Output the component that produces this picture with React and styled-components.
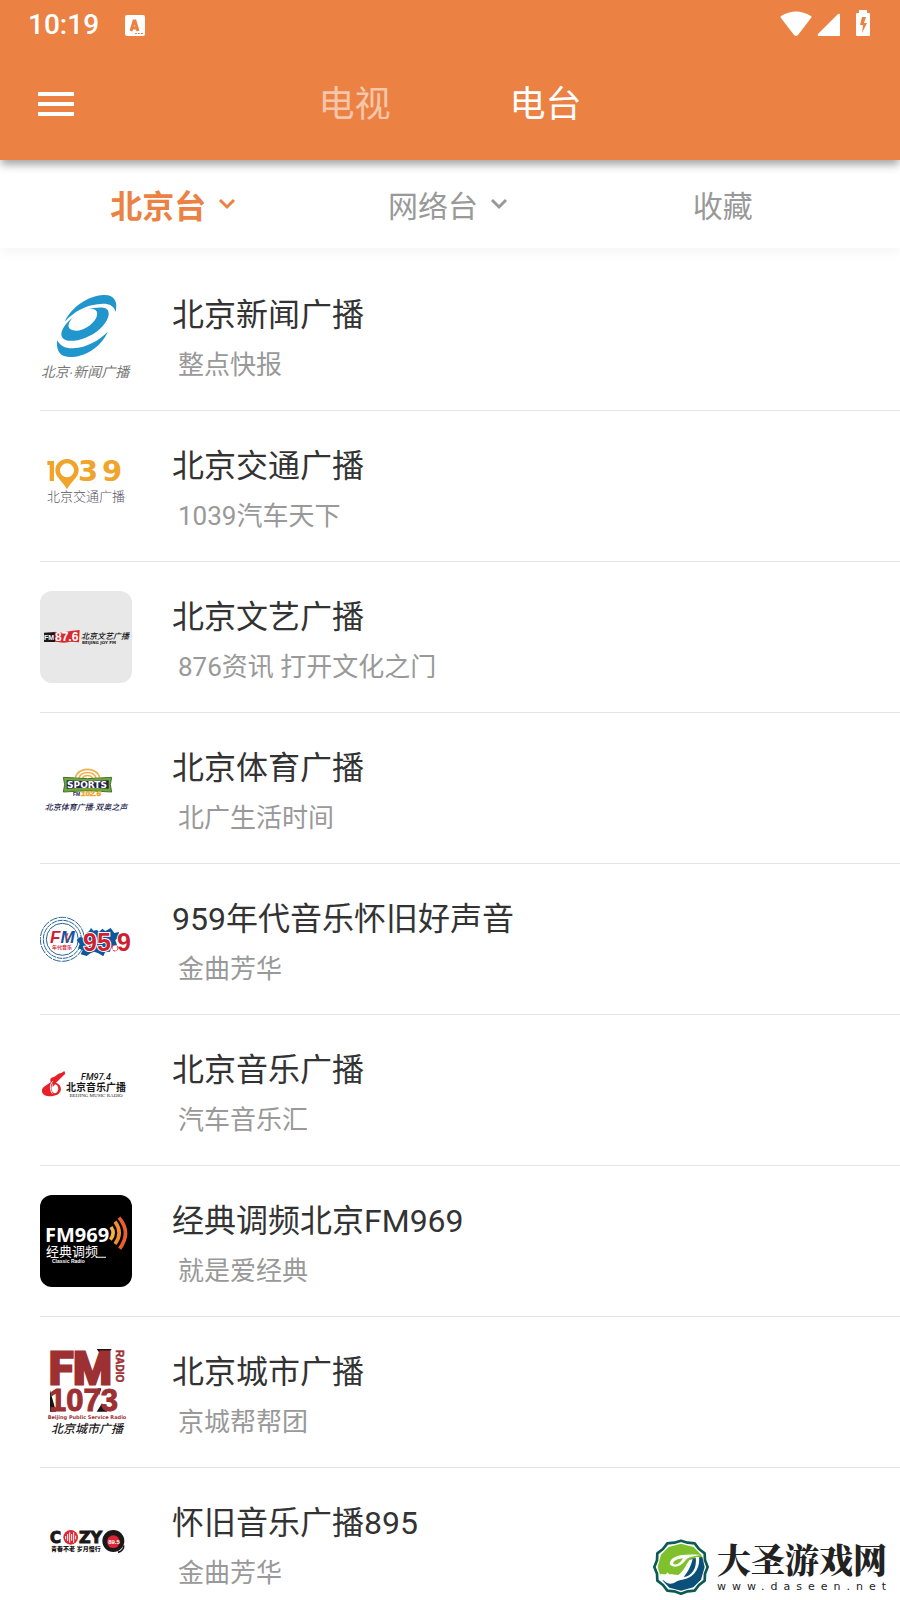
import React from "react";
import styled, { createGlobalStyle } from "styled-components";

const CJK = '"Noto Sans CJK SC", sans-serif';
const ORANGE = "#eb8142";

const GlobalStyle = createGlobalStyle`
  * { box-sizing: border-box; }
  body { margin: 0; background: #fff; font-family: Roboto, ${CJK}; }
  button { border: 0; padding: 0; background: none; font: inherit; color: inherit; cursor: pointer; }
  svg { display: block; }
`;

const Screen = styled.div`
  position: relative;
  display: flex;
  flex-direction: column;
  height: 100vh;
  overflow: hidden;
  color: #333;
`;

const Header = styled.header`
  flex: none;
  position: relative;
  z-index: 2;
  background: ${ORANGE};
  color: #fff;
  box-shadow: 0 6px 8px -1px rgba(0, 0, 0, 0.34);
`;

const StatusBar = styled.div`
  display: flex;
  align-items: center;
  height: 48px;
  padding: 2px 30px 0 28px;
`;

const Clock = styled.time`
  font-size: 28px;
  line-height: 32px;
  font-weight: 500;
  margin-right: 26px;
`;

const StatusIcons = styled.div`
  display: flex;
  margin-left: auto;
  margin-bottom: 2px;
`;

const NavBar = styled.nav`
  display: grid;
  grid-template-columns: 1fr auto 1fr;
  align-items: center;
  height: 112px;
  padding: 0 38px;
`;

const MenuButton = styled.button`
  justify-self: start;
`;

const NavTabs = styled.div`
  display: flex;
  padding-top: 2px;
`;

const NavTab = styled.button`
  width: 191px;
  font-size: 36px;
  line-height: 48px;
  opacity: ${(p) => (p.$active ? 1 : 0.55)};
`;

const SubBar = styled.nav`
  flex: none;
  position: relative;
  z-index: 1;
  display: grid;
  grid-template-columns: repeat(3, 1fr);
  height: 88px;
  padding: 0 40px 0 36px;
  background: #fff;
  box-shadow: 0 6px 10px -1px rgba(0, 0, 0, 0.04);
`;

const SubTab = styled.button`
  display: flex;
  align-items: center;
  justify-content: center;
  gap: 12px;
  font-size: ${(p) => (p.$active ? 32 : 30)}px;
  font-weight: ${(p) => (p.$active ? 700 : 400)};
  color: ${(p) => (p.$active ? ORANGE : "#999")};
`;

const List = styled.ul`
  flex: 1;
  min-height: 0;
  overflow-y: auto;
  scrollbar-width: none;
  margin: 0;
  padding: 12px 0 0 40px;
  list-style: none;
`;

const Station = styled.li`
  border-bottom: 1px solid #e4e4e4;
`;

const StationLink = styled.a`
  display: flex;
  gap: 40px;
  height: 150px;
  padding-top: 29px;
  color: inherit;
  text-decoration: none;
`;

const LogoTile = styled.span`
  flex: none;
  width: 92px;
  height: 92px;
  border-radius: 12px;
  overflow: hidden;
  background: ${(p) => p.$bg || "#fff"};
`;

const StationText = styled.span`
  display: flex;
  flex-direction: column;
  gap: 6px;
  padding-top: 2px;
`;

const Name = styled.span`
  font-size: 32px;
  line-height: 48px;
`;

const Program = styled.span`
  padding-left: 6px;
  font-size: 26px;
  line-height: 40px;
  color: #999;
`;

const Watermark = styled.aside`
  position: absolute;
  right: 8px;
  bottom: 5px;
  display: flex;
  align-items: center;
  gap: 8px;
  color: #222;
`;

const WatermarkText = styled.div`
  display: flex;
  flex-direction: column;
`;

const WatermarkName = styled.strong`
  font: 900 34px/40px "Noto Serif CJK SC", ${CJK};
`;

const WatermarkUrl = styled.span`
  font: 11px/16px "DejaVu Sans", sans-serif;
  letter-spacing: 6px;
`;

/* Artwork drawn on a grid three times finer than the tile. */
function Art({ y = 0, children }) {
  return <g transform={`translate(-10 ${y}) scale(${1 / 3})`}>{children}</g>;
}

function Logo({ label, children }) {
  return (
    <svg width="92" height="92" viewBox="0 0 92 92" role="img" aria-label={label}>
      {children}
    </svg>
  );
}

const sans = '"Liberation Sans", "Noto Sans CJK SC", sans-serif';
const wide = '"DejaVu Sans", sans-serif';

const NewsLogo = () => (
  <Logo label="北京新闻广播">
    <Art y={-9}>
      <g fill="#2196cd">
        <path d="M104 125C124 82 174 47 220 45C253 43 264 64 257 96C252 75 231 68 203 73C165 76 133 96 104 125Z" />
        <path fillRule="evenodd" d="M130 111C97 138 85 164 101 177C120 191 174 177 207 149C235 125 244 96 229 86C219 80 195 82 172 88C196 82 208 94 198 115C185 139 152 157 129 151C110 146 112 130 130 111Z" />
        <path d="M81 180C78 219 94 233 128 231C174 227 218 194 233 155C207 182 170 202 130 205C106 206 90 197 81 180Z" />
      </g>
    </Art>
    <text x="45" y="88" textAnchor="middle" fontSize="14" fontStyle="italic" fontFamily={sans} fill="#777">北京·新闻广播</text>
  </Logo>
);

const TrafficLogo = () => (
  <Logo label="1039 北京交通广播">
    <Art>
      <path fill="#f0a42b" fillRule="evenodd" d="M111 57C91 57 76 72 76 91C76 112 96 122 111 148C126 122 146 112 146 91C146 72 131 57 111 57ZM111 70A21 21 0 1 1 111 112A21 21 0 1 1 111 70Z" />
      <path fill="#f0a42b" d="M52 63H72V123H59V75H52Z" />
    </Art>
    <g fontSize="29" fontWeight="700" fontFamily={wide} fill="#f0a42b">
      <text x="38" y="41">3</text>
      <text x="62" y="41">9</text>
    </g>
    <text x="46" y="61" textAnchor="middle" fontSize="13" fontWeight="300" fontFamily={sans} fill="#556">北京交通广播</text>
  </Logo>
);

const ArtsLogo = () => (
  <Logo label="FM 87.6 北京文艺广播">
    <Art y={-11}>
      <path fill="#1a1718" d="M42 158L75 156V186H42Z" />
      <path fill="#d8292f" d="M74 155L96 158L122 153L149 150L147 187L122 185L102 188L75 185Z" />
    </Art>
    <text x="4" y="49" fontSize="7" fontWeight="700" fontFamily={sans} fill="#fff">FM</text>
    <text x="15" y="50" fontSize="12" fontWeight="700" fontFamily={sans} fill="#fff">87.6</text>
    <text x="41" y="48" fontSize="8" fontWeight="500" fontStyle="italic" fontFamily={sans} fill="#111">北京文艺广播</text>
    <text x="42" y="53" fontSize="4" fontWeight="700" fontFamily={wide} fill="#222">BEIJING JOY FM</text>
  </Logo>
);

const SportsLogo = () => (
  <Logo label="SPORTS FM102.6">
    <Art y={8}>
      <g fill="none" stroke="#f0b04a" strokeWidth="5">
        <path d="M136 83C143 50 202 50 209 83" />
        <path d="M147 84C153 62 192 62 198 84" />
        <path d="M158 84C162 74 183 74 187 84" />
      </g>
      <path fill="#70a83a" stroke="#42702b" strokeWidth="3" d="M100 82Q172 90 245 82L241 104L245 126Q172 118 100 126L104 104Z" />
      <path fill="#24234d" d="M110 91Q172 95 236 91V116Q172 111 110 116Z" />
    </Art>
    <text x="47" y="46" textAnchor="middle" fontSize="9" fontWeight="700" fontFamily={wide} fill="#fff">SPORTS</text>
    <text x="33" y="54" fontSize="5" fontWeight="700" fontFamily={sans} fill="#24234d">FM</text>
    <text x="41" y="54" fontSize="8" fontWeight="700" fontStyle="italic" fontFamily={sans} fill="#eda52e" stroke="#eda52e" strokeWidth="0.5">102.6</text>
    <text x="46" y="68" textAnchor="middle" fontSize="8" fontWeight="500" fontStyle="italic" fontFamily={sans} fill="#24234d">北京体育广播·双奥之声</text>
  </Logo>
);

const ErasLogo = () => (
  <Logo label="FM 95.9 年代音乐">
    <Art y={7}>
      <g fill="none" stroke="#26639a" strokeWidth="3">
        <circle cx="97" cy="118" r="66" strokeDasharray="24 3" />
        <circle cx="97" cy="118" r="57" strokeDasharray="16 2" />
        <circle cx="97" cy="118" r="48" />
      </g>
      <path fill="#fff" d="M60 88H134V148H60Z" />
      <path fill="#10569a" d="M140 120L150 111L160 114L169 98L177 94L183 84L190 92L201 90L207 96L217 86L226 93L242 84L253 99L267 96L265 112L256 121L261 134L243 143L240 155L225 157L220 169L205 160L193 155L181 160L170 168L152 163L158 150L144 145L149 132Z" />
    </Art>
    <text x="10" y="50" fontSize="17" fontWeight="700" fontStyle="italic" fontFamily={sans} fill="#14529a">
      <tspan fill="#cf2135">F</tspan>M
    </text>
    <path d="M28 40l-2 5 3 4" fill="none" stroke="#e5352d" />
    <text x="22" y="56" textAnchor="middle" fontSize="5" fontWeight="700" fontFamily={sans} fill="#cf2135">年代音乐</text>
    <g fontWeight="700" fontFamily={sans} fontSize="25" fill="#cf1f31" stroke="#fff" strokeWidth="2" paintOrder="stroke">
      <text x="43" y="58">95</text>
      <text x="77" y="58">9</text>
    </g>
    <circle cx="75" cy="55" r="3" fill="#fff" stroke="#cf1f31" strokeDasharray="3 1" />
  </Logo>
);

const MusicLogo = () => (
  <Logo label="FM97.4 北京音乐广播">
    <Art y={6}>
      <path fill="#e5222a" fillRule="evenodd" d="M103 63L106 71L78 98C97 105 97 126 82 134C69 140 41 143 36 126C34 112 46 108 62 97C60 91 60 83 69 82C79 78 86 68 94 69ZM68 99C61 116 65 128 75 130C88 127 88 107 76 103L68 111Z" />
      <path fill="none" stroke="#fff" strokeWidth="3" d="M68 94C58 104 60 121 67 131" />
    </Art>
    <text x="56" y="36" textAnchor="middle" fontSize="9" fontStyle="italic" fontWeight="500" fontFamily="Roboto, sans-serif" fill="#161616">FM97.4</text>
    <text x="26" y="47" fontSize="10" fontWeight="700" fontFamily={sans} fill="#161616">北京音乐广播</text>
    <text x="56" y="53" textAnchor="middle" fontSize="5" fontFamily='"Liberation Serif", serif' fill="#222">BEIJING MUSIC RADIO</text>
  </Logo>
);

const ClassicLogo = () => (
  <Logo label="FM969 经典调频 Classic Radio">
    <text x="5" y="47" fontSize="20" fontWeight="700" fontFamily='"Open Sans", sans-serif' fill="#fff">FM969</text>
    <Art y={-10}>
      <g fill="none" strokeWidth="11">
        <path stroke="#f4b43d" d="M243 126Q257 145 241 164" />
        <path stroke="#f28b2e" d="M255 110Q280 144 255 177" />
        <path stroke="#e8602c" d="M267 98Q305 143 269 191" />
      </g>
      <path fill="#fff" d="M197 215H228V218H197Z" />
    </Art>
    <text x="6" y="61" fontSize="13" fontFamily={sans} fill="#fff">经典调频</text>
    <text x="12" y="68" fontSize="5" fontWeight="700" fontFamily={sans} fill="#fff">Classic Radio</text>
  </Logo>
);

const CityLogo = () => (
  <Logo label="FM 1073 RADIO 北京城市广播">
    <Art y={-11}>
      <path fill="#171314" d="M200 42H245L222 72ZM60 165L78 230H60ZM200 230L216 205L232 230ZM203 160H214L208 180Z" />
    </Art>
    <text x="9" y="38" fontSize="44" fontWeight="700" fontFamily="Roboto, sans-serif" fill="#9d3033" stroke="#9d3033" strokeWidth="3">FM</text>
    <text x="9" y="65" fontSize="31" fontWeight="700" fontFamily={sans} fill="#9d3033" stroke="#9d3033">1073</text>
    <text transform="translate(76 4) rotate(90)" fontSize="10" fontWeight="700" fontFamily={sans} fill="#9d3033" stroke="#9d3033" strokeWidth="0.5">RADIO</text>
    <text x="47" y="73" textAnchor="middle" fontSize="5" fontWeight="700" fontFamily={wide} fill="#9d3033">Beijing Public Service Radio</text>
    <text x="47" y="87" textAnchor="middle" fontSize="12" fontStyle="italic" fontWeight="500" fontFamily={sans} fill="#1b1718">北京城市广播</text>
  </Logo>
);

const CozyLogo = () => (
  <Logo label="COZY 89.5 青春不老 岁月慢行">
    <Art y={13}>
      <circle cx="122" cy="82" r="22" fill="#dc2634" />
      <path stroke="#fff" strokeWidth="3" d="M107 78V88M113 72V93M119 67V98M125 72V92M131 67V98M137 77V88" />
      <circle cx="250" cy="93" r="33" fill="#1c1819" />
      <path fill="none" stroke="#1c1819" strokeWidth="5" d="M281 106Q282 122 264 127" />
      <circle cx="250" cy="95" r="19" fill="#dc2634" />
    </Art>
    <text x="10" y="46" fontSize="15" fontWeight="700" fontFamily={wide} fill="#1c1819" stroke="#1c1819">C</text>
    <text x="39" y="46" fontSize="16" fontWeight="700" fontFamily={wide} fill="#1c1819" stroke="#1c1819">ZY</text>
    <text x="74" y="47" textAnchor="middle" fontSize="6" fontWeight="700" fontFamily={sans} fill="#fff">89.5</text>
    <text x="11" y="54" fontSize="6" fontWeight="900" fontFamily={sans} fill="#1c1819">青春不老 岁月慢行</text>
  </Logo>
);

const Chevron = () => (
  <svg width="18" height="12" viewBox="0 0 18 12" fill="none" stroke="currentColor" strokeWidth="3" aria-hidden="true">
    <path d="M2 2l7 7 7-7" />
  </svg>
);

const Emblem = () => (
  <svg width="56" height="56" viewBox="0 0 168 168" aria-hidden="true">
    <path fill="#fff" stroke="#0b5a54" strokeWidth="8" strokeLinejoin="round" d="M84 5L104 11L125 13L138 30L155 43L156 64L164 84L156 104L155 125L138 138L125 155L104 157L84 164L64 157L43 155L30 138L13 125L12 104L4 84L12 64L13 43L30 30L43 13L64 11Z" />
    <path fill="#7fc12c" d="M84 14L122 24L145 48L148 56L110 70L80 110L55 106L40 112L22 110L14 84L24 47L47 24Z" />
    <path fill="#0b5078" d="M148 54L155 84L144 122L121 145L84 155L49 146L28 124L60 124L85 108L112 60Z" />
    <path fill="#fff" d="M21 106C30 102 36 112 44 100C48 110 58 106 76 108C92 96 98 78 110 62L119 60C114 82 104 100 92 114C116 112 133 88 128 54L138 54C142 90 120 118 88 122C70 122 62 140 42 132C32 126 24 118 21 106Z" />
    <path fill="#fff" d="M50 76C50 52 84 43 142 48C118 52 104 54 96 66C84 82 62 90 50 76ZM60 74C70 80 82 73 90 58C74 60 62 64 60 74Z" fillRule="evenodd" />
  </svg>
);

const stations = [
  ["北京新闻广播", "整点快报", NewsLogo],
  ["北京交通广播", "1039汽车天下", TrafficLogo],
  ["北京文艺广播", "876资讯 打开文化之门", ArtsLogo, "#e8e8e8"],
  ["北京体育广播", "北广生活时间", SportsLogo],
  ["959年代音乐怀旧好声音", "金曲芳华", ErasLogo],
  ["北京音乐广播", "汽车音乐汇", MusicLogo],
  ["经典调频北京FM969", "就是爱经典", ClassicLogo, "#000"],
  ["北京城市广播", "京城帮帮团", CityLogo],
  ["怀旧音乐广播895", "金曲芳华", CozyLogo],
];

export default function App() {
  return (
    <Screen>
      <GlobalStyle />
      <Header>
        <StatusBar>
          <Clock>10:19</Clock>
          <svg width="20" height="21" viewBox="0 0 20 21" aria-hidden="true">
            <rect width="20" height="21" rx="2" fill="#fff" />
            <path fill="none" stroke={ORANGE} strokeWidth="3" d="M6 16L9 6H10L13 16M7 13H12" />
            <path fill={ORANGE} d="M10 18h2v1h-2zM13 18h2v1h-2zM16 18h2v1h-2z" />
          </svg>
          <StatusIcons>
            <svg width="90" height="28" viewBox="0 0 90 28" fill="#fff" aria-hidden="true">
              <path d="M1 8Q0 7 1 6Q16-3 31 6Q32 7 31 8L18 25Q16 27 14 25Z" />
              <path d="M38 24L58 4Q60 3 60 5V26H39Q37 26 38 24Z" />
              <path fillRule="evenodd" d="M79 0h8v3h2q1 0 1 1v21q0 1-1 1H77q-1 0-1-1V4q0-1 1-1h2ZM82 7l-2 8h3l-1 8 5-10h-3l2-6Z" />
            </svg>
          </StatusIcons>
        </StatusBar>
        <NavBar>
          <MenuButton aria-label="菜单">
            <svg width="36" height="24" viewBox="0 0 36 24" fill="#fff" aria-hidden="true">
              <path d="M0 0h36v4H0zM0 10h36v4H0zM0 20h36v4H0z" />
            </svg>
          </MenuButton>
          <NavTabs>
            <NavTab>电视</NavTab>
            <NavTab $active>电台</NavTab>
          </NavTabs>
        </NavBar>
      </Header>
      <SubBar>
        <SubTab $active>北京台<Chevron /></SubTab>
        <SubTab>网络台<Chevron /></SubTab>
        <SubTab>收藏</SubTab>
      </SubBar>
      <List>
        {stations.map(([name, program, Mark, bg]) => (
          <Station key={name}>
            <StationLink href="#">
              <LogoTile $bg={bg}><Mark /></LogoTile>
              <StationText>
                <Name>{name}</Name>
                <Program>{program}</Program>
              </StationText>
            </StationLink>
          </Station>
        ))}
      </List>
      <Watermark>
        <Emblem />
        <WatermarkText>
          <WatermarkName>大圣游戏网</WatermarkName>
          <WatermarkUrl>www.daseen.net</WatermarkUrl>
        </WatermarkText>
      </Watermark>
    </Screen>
  );
}
